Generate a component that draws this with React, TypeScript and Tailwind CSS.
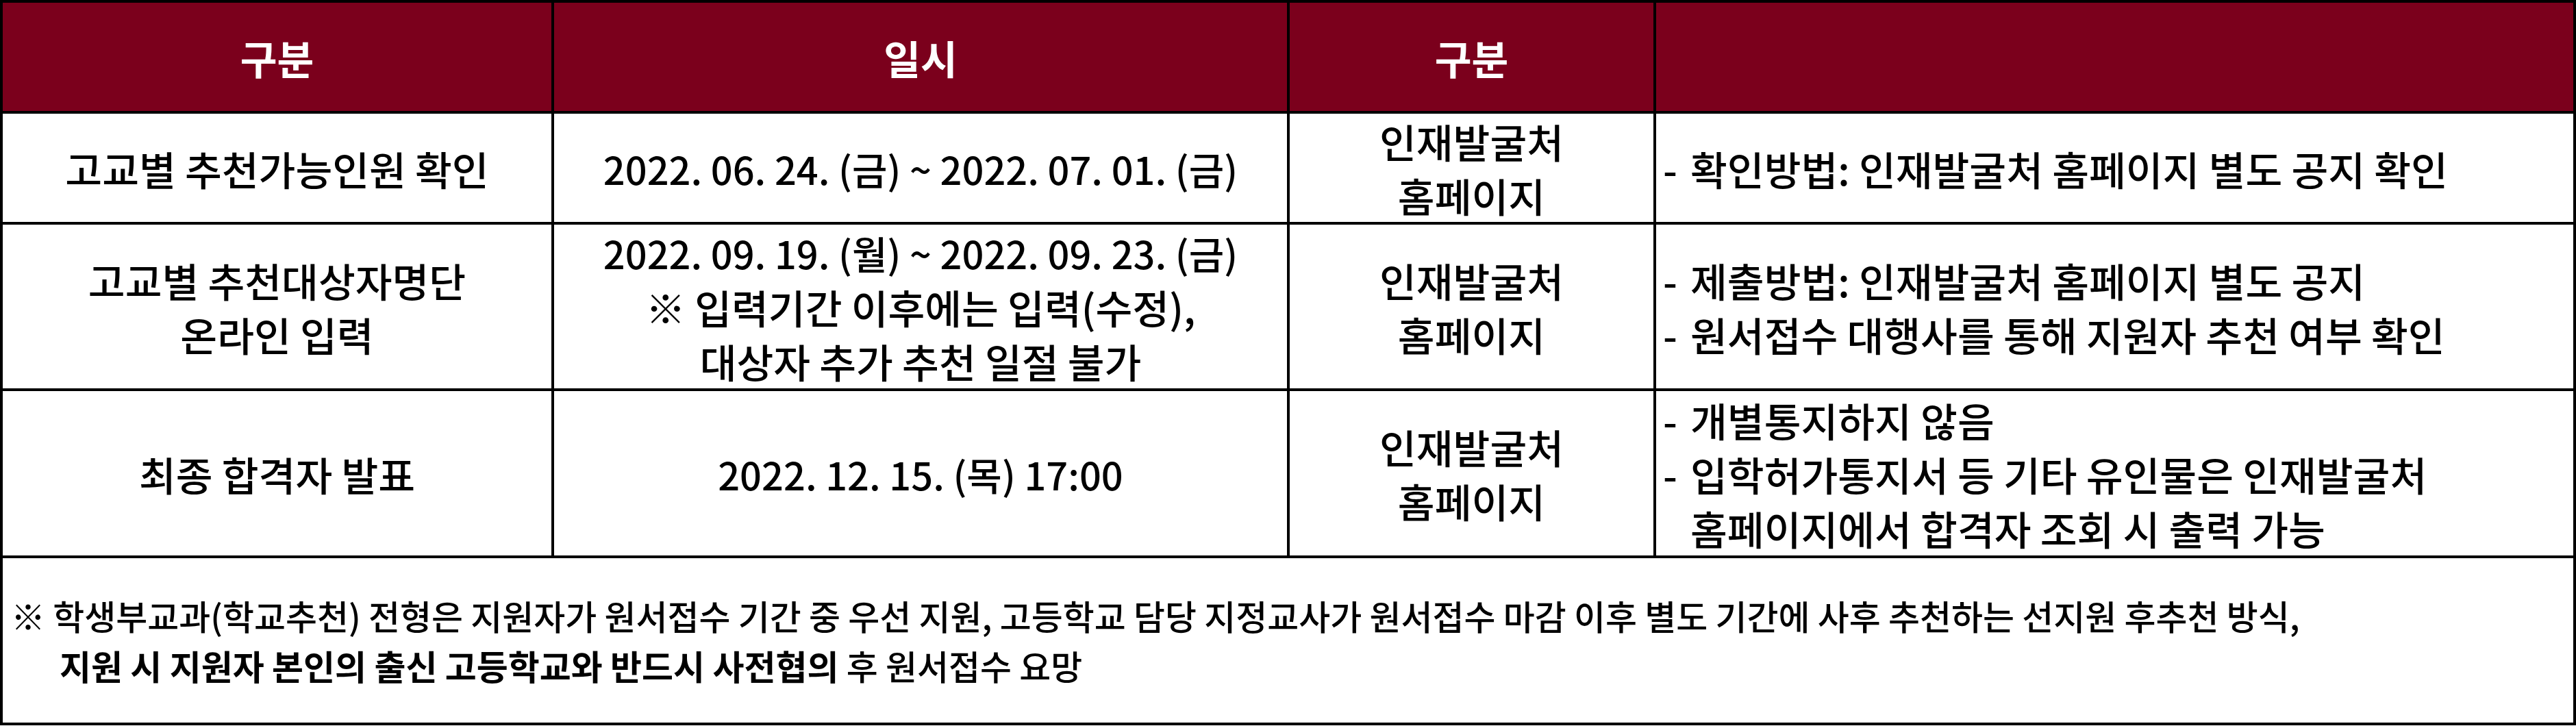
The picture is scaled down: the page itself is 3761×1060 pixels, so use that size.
const font = "font-['Noto_Sans_CJK_KR','Noto_Sans',sans-serif]";

function CenterCell({ lines, dates = [] }: { lines: string[]; dates?: number[] }) {
  return (
    <div className="bg-white flex flex-col items-center justify-center text-center">
      {lines.map((l, i) => (
        <div key={l} className={dates.includes(i) ? "whitespace-nowrap text-[56px]" : "whitespace-nowrap"}>
          {l}
        </div>
      ))}
    </div>
  );
}

// bullet lines in the last column; indent = continuation line without dash
function NoteCell({ items }: { items: { text: string; dash: boolean }[] }) {
  return (
    <div className="bg-white flex flex-col items-start justify-center pl-[10px]">
      {items.map((it) => (
        <div key={it.text} className="flex whitespace-nowrap">
          <span className="inline-block w-[40px]">{it.dash ? "-" : ""}</span>
          <span>{it.text}</span>
        </div>
      ))}
    </div>
  );
}

export default function App() {
  return (
    <div className={`${font} w-[3761px] bg-white text-black font-medium`}>
      <div className="grid grid-cols-[801px_1070px_531px_1339px] grid-rows-[158px_158px_239px_240px_240px] gap-[4px] bg-black p-[4px] text-[58.5px] leading-[79px]">
        {/* header */}
        <div className="bg-[#7b001c] text-white font-bold flex items-center justify-center">구분</div>
        <div className="bg-[#7b001c] text-white font-bold flex items-center justify-center">일시</div>
        <div className="bg-[#7b001c] text-white font-bold flex items-center justify-center">구분</div>
        <div className="bg-[#7b001c]" />

        {/* row 1 */}
        <CenterCell lines={["고교별 추천가능인원 확인"]} />
        <CenterCell lines={["2022. 06. 24. (금) ~ 2022. 07. 01. (금)"]} dates={[0]} />
        <CenterCell lines={["인재발굴처", "홈페이지"]} />
        <NoteCell items={[{ text: "확인방법: 인재발굴처 홈페이지 별도 공지 확인", dash: true }]} />

        {/* row 2 */}
        <CenterCell lines={["고교별 추천대상자명단", "온라인 입력"]} />
        <CenterCell
          lines={[
            "2022. 09. 19. (월) ~ 2022. 09. 23. (금)",
            "※ 입력기간 이후에는 입력(수정),",
            "대상자 추가 추천 일절 불가",
          ]}
          dates={[0]}
        />
        <CenterCell lines={["인재발굴처", "홈페이지"]} />
        <NoteCell
          items={[
            { text: "제출방법: 인재발굴처 홈페이지 별도 공지", dash: true },
            { text: "원서접수 대행사를 통해 지원자 추천 여부 확인", dash: true },
          ]}
        />

        {/* row 3 */}
        <CenterCell lines={["최종 합격자 발표"]} />
        <CenterCell lines={["2022. 12. 15. (목) 17:00"]} dates={[0]} />
        <CenterCell lines={["인재발굴처", "홈페이지"]} />
        <NoteCell
          items={[
            { text: "개별통지하지 않음", dash: true },
            { text: "입학허가통지서 등 기타 유인물은 인재발굴처", dash: true },
            { text: "홈페이지에서 합격자 조회 시 출력 가능", dash: false },
          ]}
        />

        {/* note row */}
        <div className="col-span-4 bg-white flex flex-col justify-center pl-[12px] text-[50px] leading-[73px]">
          <div className="whitespace-nowrap">
            ※ 학생부교과(학교추천) 전형은 지원자가 원서접수 기간 중 우선 지원, 고등학교 담당 지정교사가 원서접수 마감 이후 별도 기간에 사후 추천하는 선지원 후추천 방식,
          </div>
          <div className="whitespace-nowrap pl-[71px]">
            <span className="font-bold">지원 시 지원자 본인의 출신 고등학교와 반드시 사전협의</span> 후 원서접수 요망
          </div>
        </div>
      </div>
    </div>
  );
}
